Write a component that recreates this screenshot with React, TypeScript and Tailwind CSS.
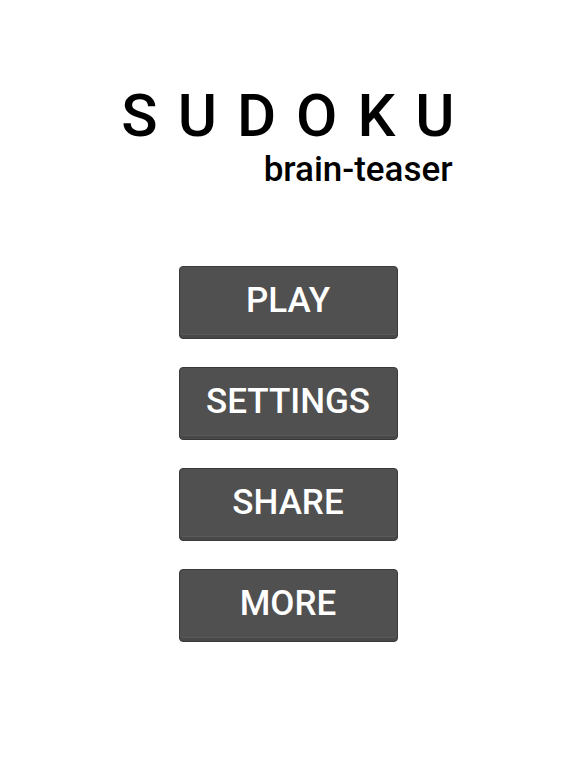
import React from "react";

const buttons = ["PLAY", "SETTINGS", "SHARE", "MORE"];

export default function App() {
  return (
    <div className="w-[576px] h-[768px] bg-white flex flex-col items-center" style={{ fontFamily: "Roboto, 'Liberation Sans', sans-serif" }}>
      <div className="mt-[80px] flex flex-col items-end">
        <div className="text-[60px] leading-[72px] font-medium text-black tracking-[20px] mr-[-20px]">SUDOKU</div>
        <div className="text-[35px] leading-[40px] font-medium text-black mt-[-2px] mr-[2px]">brain-teaser</div>
      </div>
      <div className="mt-[76px] flex flex-col gap-[28px]">
        {buttons.map((b) => (
          <div
            key={b}
            className="w-[219px] h-[73px] rounded-[4px] bg-[#505050] border border-[#3a3a3a] shadow-[inset_0_-3px_0_#484848,inset_0_-4px_0_#5a5a5a] flex items-center justify-center pb-[3px] text-white text-[35px] font-medium"
          >
            {b}
          </div>
        ))}
      </div>
    </div>
  );
}
